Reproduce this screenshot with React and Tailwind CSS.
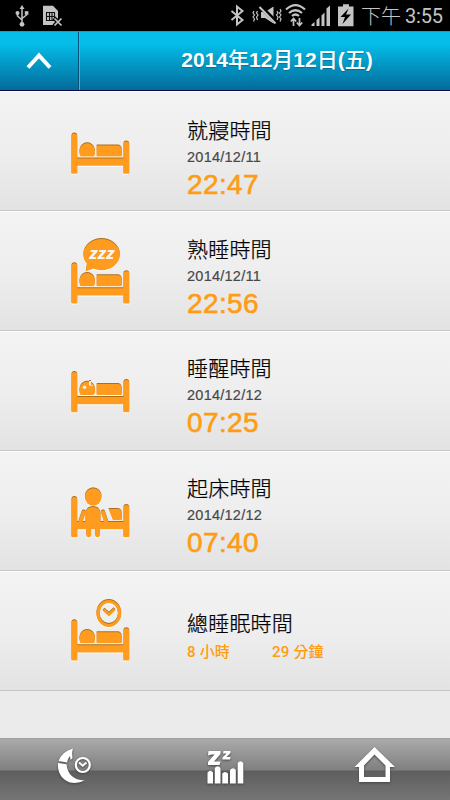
const ORANGE = '#ff9c1f'

const ROWS = [
  { title: '就寢時間', date: '2014/12/11', time: '22:47', icon: 'bed', dy: 42.5, pad: 'pt-[23px]' },
  { title: '熟睡時間', date: '2014/12/11', time: '22:56', icon: 'asleep', dy: 52.3, pad: 'pt-[22px]' },
  { title: '睡醒時間', date: '2014/12/12', time: '07:25', icon: 'awake', dy: 41, pad: 'pt-[21px]' },
  { title: '起床時間', date: '2014/12/12', time: '07:40', icon: 'up', dy: 46, pad: 'pt-[21px]' },
  { title: '總睡眠時間', total: ['8 小時', '29 分鐘'], icon: 'total', dy: 49.3, pad: 'pt-[36px]' },
]

function Frame() {
  return (
    <path d="M1.5 40.3V2.7Q1.500 0 4.300 0T7.200 2.700V25H53.500V10.700Q53.500 8 56.300 8T59.200 10.700V40.300H53.500V32.300H7.200V40.300Z" />
  )
}

function Sleeper() {
  return (
    <>
      <path d="M10.500 23C7.500 17 11 9.800 17.200 9.800S26.800 17 24 23Z" />
      <path d="M26.700 12H47C50.500 12 51.700 14 51.700 17V23H26.700Z" />
    </>
  )
}

// all bed pictures share the frame, dy is where its top post starts inside the row
function BedIcon({ kind, dy }) {
  return (
    <svg width="62" height="120" viewBox="0 0 62 120" className="shrink-0" fill={ORANGE}
      style={{ filter: 'drop-shadow(0 -0.5px 0.3px #a8701f) drop-shadow(0 1px 0 #fff)' }}>
      <g transform={`translate(0 ${dy})`}>
        <Frame />
        {kind !== 'up' && <Sleeper />}
        {kind === 'asleep' && (
          <>
            <ellipse cx="31.600" cy="-8.600" rx="18.200" ry="15.600" />
            <path d="M17.500-2L15.800 8.300L25.500 4.500Z" />
            <text x="31.700" y="-4" textAnchor="middle" fontSize="16" fontWeight="800" fontStyle="italic" fill="#f4f4f4"
              className="font-['Noto_Sans',sans-serif]" textLength="25.500" lengthAdjust="spacingAndGlyphs">zzz</text>
          </>
        )}
        {kind === 'awake' && (
          <g fill="#eee">
            <circle cx="14.500" cy="15.300" r="1.800" />
            <path d="M19 9H21V13.500H19Z" />
            <circle cx="22" cy="13.500" r=".8" />
          </g>
        )}
        {kind === 'up' && (
          <>
            <ellipse cx="23.200" cy="0" rx="8.300" ry="8.700" />
            <path d="M15.500 27V18Q15.500 10 23 10T30.500 18V27Z" />
            <path d="M13.700 15.500L10.500 25M33 15.500L36.500 26" stroke={ORANGE} strokeWidth="4" strokeLinecap="round" />
            <path d="M18.700 28V38M27.500 28V38" stroke={ORANGE} strokeWidth="4.800" strokeLinecap="round" />
            <path d="M38.500 12H47C50.500 12 51.700 14 51.700 17V23.300H43Z" />
          </>
        )}
        {kind === 'total' && (
          <g fill="none" stroke={ORANGE} strokeWidth="3.200">
            <ellipse cx="38.800" cy="-6.800" rx="10.800" ry="12" />
            <path d="M33.500-10.500L39-5.800L44.500-11" strokeWidth="2.800" />
          </g>
        )}
      </g>
    </svg>
  )
}

function StatusBar() {
  return (
    <div className="flex h-[31px] items-center bg-black text-[#c4c4c4]">
      <svg width="70" height="31" viewBox="0 0 70 31" fill="currentColor">
        <path d="M22 5L24.500 9H19.500Z" />
        <path d="M22 8V25M17.500 13V16L22 20M26.500 13V15L22 18.500" fill="none" stroke="currentColor" strokeWidth="1.500" />
        <circle cx="22" cy="24.300" r="2.400" />
        <circle cx="17.500" cy="13" r="2" />
        <path d="M24.800 11.200H28.400V14.700H24.800Z" />
        <path d="M43 5.700H53L58 11V18L55 25H43Z" />
        <path d="M46.500 12.500H54.500V20.500H46.500ZM46.500 16.500H54.500M49.500 12.500V20.500M52 12.500V20.500" fill="none" stroke="#111" strokeWidth="1.100" />
        <path d="M54 18L62 26M62 18L54 26" stroke="#000" strokeWidth="4" />
        <path d="M54.500 18.500L61.500 25.500M61.500 18.500L54.500 25.500" stroke="currentColor" strokeWidth="1.700" />
      </svg>
      <svg width="130" height="31" viewBox="0 0 130 31" fill="none" stroke="currentColor" className="ml-[158px]">
        <path d="M3.500 11L14.500 20L9 24.500V6.500L14.500 11L3.500 20" strokeWidth="2" />
        <path d="M26 11L25 13L26.500 15L25 17L26.500 19L25.500 21.500M29.500 11L28.500 13L30 15L28.500 17L29.500 20M52 9L53 11L51.500 13L53 15L51.500 17L53 19L52 21.500M49 11L50 13L48.500 15L50 17L49 20" strokeWidth="1.200" />
        <path d="M33 12H37L45.500 6.500V23.500L37 18H33Z" fill="currentColor" stroke="none" />
        <path d="M32 6L49 23" stroke="#000" strokeWidth="4" />
        <path d="M31.500 7L47.500 23.500" strokeWidth="2" />
        <path d="M58 9.500Q67.500 .8 77 9.500M61 13Q67.500 7.500 74 13M64 16Q67.500 13 71 16" strokeWidth="2.200" />
        <path d="M65.500 26V19M62.800 21.500L65.500 18.500L68.200 21.500M71.500 18V25M68.800 22.500L71.500 25.500L74.200 22.500" strokeWidth="1.700" />
        <path d="M83.500 26V24.500L86.500 22V26ZM88.500 26V20L91.500 17.500V26ZM93.500 26V15.500L96.500 12.500V26ZM98.500 26V8.500L102 5.500V26Z" fill="currentColor" stroke="none" />
        <path d="M110 6.500H115V4.300H121V6.500H125.500V26.300H110Z" fill="currentColor" stroke="none" />
        <path d="M120.500 8.500L112.500 17H117L114.500 24L123 14.500H118Z" fill="#000" stroke="none" />
      </svg>
      <span className="ml-[3px] flex text-[20px] leading-[31px] font-light font-[Roboto,'Noto_Sans_CJK_TC',sans-serif]">
        <span className="relative top-[2px]">下午</span>
        <span className="ml-[4px] pt-px tracking-[-0.2px] font-normal">3:55</span>
      </span>
    </div>
  )
}

function Header() {
  return (
    <div className="flex h-[60px] border-t border-b border-t-[#4f8996] border-b-[#00084a] bg-linear-to-b from-[#05bde8] from-20% to-[#036b9a]">
      <button className="flex w-[79px] items-center justify-center border-r border-r-[#07527a]">
        <svg width="26" height="20" viewBox="0 0 26 20" fill="none" stroke="#fff" strokeWidth="4">
          <path d="M2 16.500L13 4.500L24 16.500" />
        </svg>
      </button>
      <h1 className="flex-1 border-l border-l-[#42b3da] pl-[24px] text-center text-[21px] leading-[56px] font-bold text-white font-['Liberation_Sans','Noto_Sans_CJK_TC',sans-serif] [text-shadow:0_1px_1px_#0456]">
        2014<span className="font-medium">年</span>12<span className="font-medium">月</span>12<span className="font-medium">日</span>(<span className="font-medium">五</span>)
      </h1>
    </div>
  )
}

function Row({ row }) {
  return (
    <li className="flex h-[120px] border-t border-b border-t-white border-b-[#c5c5c5] bg-linear-to-b from-[#f3f3f3] via-[#eeeeee] to-[#e3e3e3] pl-[70px]">
      <div className="-mt-px w-[117px]"><BedIcon kind={row.icon} dy={row.dy} /></div>
      <div className={row.pad}>
        <div className="text-[21px] leading-[28px] tracking-[0.2px] text-black font-light font-['Noto_Sans_CJK_TC',sans-serif] [-webkit-text-stroke:0.25px_#000]">{row.title}</div>
        {row.total ? (
          <div className="flex pt-[5px] text-[15px] leading-[22px] tracking-[0.2px] font-medium text-[#ff9c12] font-[Roboto,'Noto_Sans_CJK_TC',sans-serif]">
            {row.total.map(t => <span key={t} className="w-[85px]">{t}</span>)}
          </div>
        ) : (
          <div className="font-['Liberation_Sans',sans-serif]">
            <div className="pt-[6px] text-[14.5px] leading-[16px] tracking-[0.25px] text-[#484848] [-webkit-text-stroke:0.2px_#484848]">{row.date}</div>
            <div className="pt-[3px] text-[28px] leading-[34px] tracking-[0.4px] text-[#ff9c12] [-webkit-text-stroke:0.6px_#ff9c12]">{row.time}</div>
          </div>
        )}
      </div>
    </li>
  )
}

function TabBar() {
  return (
    <nav className="grid h-[62px] grid-cols-3 border-t border-[#a0a0a0] bg-[linear-gradient(#aaa_0,#808080_31px,#5e5e5e_32px,#757575_100%)] text-white [&_svg]:drop-shadow-[0_1px_1px_#444]">
      <svg width="150" height="61" viewBox="0 739 150 61" fill="currentColor">
        <path d="M73 748.500Q62 751.500 58.500 761L67 762.500Q67.500 759 70 756L70.500 760L72.500 758Q71.500 752 73 748.500Z" />
        <path d="M58 763L66.500 764.200Q68 779.500 84.500 780.500Q78 784 70 782.500Q57 777.500 58 763Z" />
        <circle cx="82.800" cy="765" r="7" fill="none" stroke="currentColor" strokeWidth="2.200" />
        <path d="M79 762.500L82.700 765.700L86.500 762.500" fill="none" stroke="currentColor" strokeWidth="1.800" />
      </svg>
      <svg width="150" height="61" viewBox="150 739 150 61" fill="currentColor">
        <path d="M208.500 751H220.500V754L214 761.500H220.500L219.500 765H208V762L214.500 754.500H211.500L208 755.500Z" />
        <path d="M223.500 751H230.500V753L226.500 757H230.500L230 759.500H222.500V757.500L226.500 753.500H223Z" />
        <path d="M207.500 783.500V772.500Q210.500 769 213 772.500V783.500ZM214.800 783.500V768Q217.700 764.500 220.500 768V783.500ZM222.300 783.500V773.500Q225 770.500 228 773.500V783.500ZM230 783.500V770Q233 766.500 235.800 770V783.500ZM237.700 783.500V763Q240.500 759.500 243.300 763V783.500Z" />
      </svg>
      <svg width="150" height="61" viewBox="300 739 150 61" fill="currentColor" fillRule="evenodd">
        <path d="M374.500 747L395 767H390V782H359V767H354.500ZM374.500 754.500L364 765.500V777H385.500V765.500Z" />
      </svg>
    </nav>
  )
}

export default function App() {
  return (
    <div className="flex h-[800px] w-[450px] flex-col overflow-hidden bg-[#ebebeb]">
      <StatusBar />
      <Header />
      <ul className="flex-1">
        {ROWS.map(r => <Row key={r.title} row={r} />)}
      </ul>
      <TabBar />
    </div>
  )
}
